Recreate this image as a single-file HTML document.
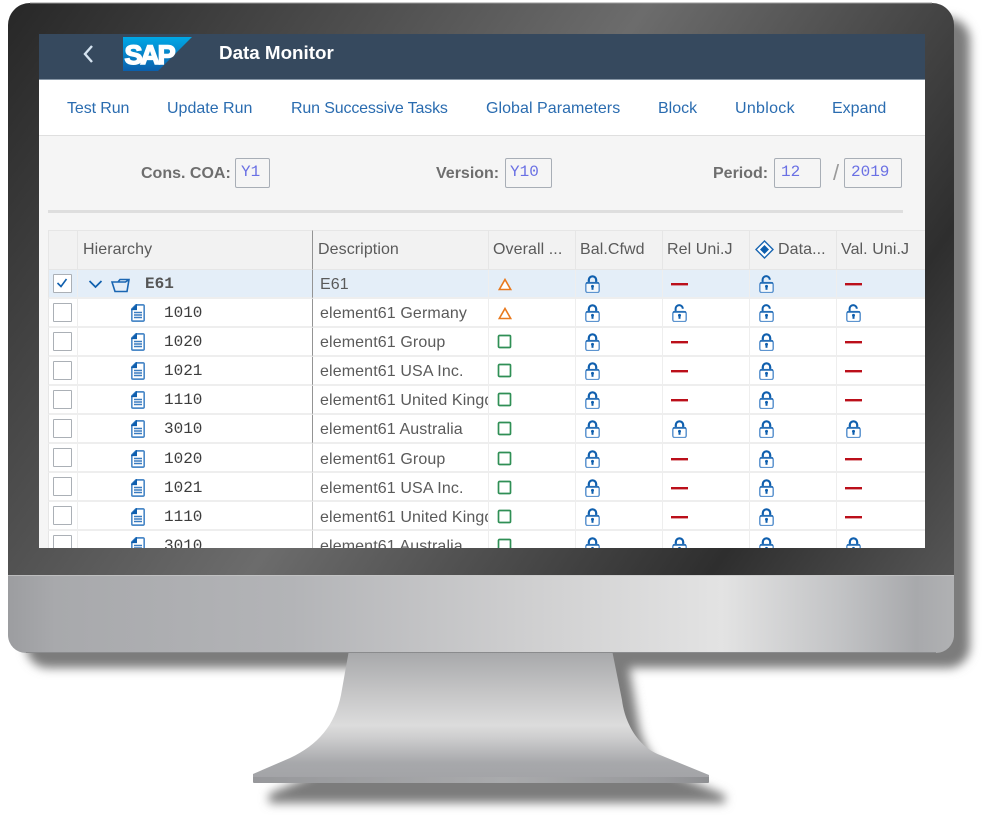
<!DOCTYPE html>
<html><head><meta charset="utf-8"><style>
*{box-sizing:border-box}
html,body{margin:0;padding:0;background:#fff;width:1000px;height:820px;overflow:hidden}
body{position:relative;font-family:"Liberation Sans",sans-serif}
#bg{position:absolute;left:0;top:0}
#screen{position:absolute;left:39px;top:34px;width:886px;height:514px;overflow:hidden;background:#f5f5f5;filter:blur(.3px)}
.hdr{position:absolute;left:0;top:0;width:886px;height:46px;background:#36495e;border-bottom:1px solid #8796a5}
.tb{position:absolute;left:0;top:46px;width:886px;height:56px;background:#fff;border-bottom:1px solid #dfdfdf}
.tb span{position:absolute;top:19px;font-size:16px;line-height:20px;color:#2a6cb0;white-space:nowrap}
.title{position:absolute;left:180px;top:8px;color:#fff;font-weight:bold;font-size:18.8px;line-height:22px}
.lbl{position:absolute;top:130px;font-weight:bold;font-size:16px;line-height:20px;color:#6e6e6e;white-space:nowrap}
.inp{position:absolute;top:124px;height:30px;border:1px solid #a8aeb6;border-radius:2px;font-family:"Liberation Mono",monospace;font-size:16px;line-height:27px;color:#6a70e4;padding-left:5px;background:#f5f5f5}
.rule{position:absolute;left:9px;top:176px;width:855px;height:3px;background:#dedede}
table{position:absolute;left:9px;top:196px;width:878px;border-collapse:separate;border-spacing:0;table-layout:fixed;font-size:16px;color:#5a5a5a}
th{height:40px;background:#f2f2f2;font-weight:normal;text-align:left;padding:0 0 1px 4px;border-top:1px solid #e6e6e6;border-right:1px solid #e6e6e6;border-bottom:1px solid #e6e6e6;white-space:nowrap;overflow:hidden;color:#5a5a5a;letter-spacing:.08px}
th.p{padding-left:5px}
td{height:29px;background:#fff;padding:2px 0 0 7px;border-bottom:2px solid #eeeeee;border-right:1px solid #eeeeee;white-space:nowrap;overflow:hidden;position:relative;letter-spacing:.12px}
tr.s td{background:#e4eef8}
tr.l td{padding-top:4px}
tr.l svg.i{transform:translateY(1px)}
td:first-child,th:first-child{border-left:1px solid #e6e6e6;padding:0}
tr.l td:first-child{padding:0}
td.t,th.t{border-right:1px solid #949494}
tr.l td.t{border-right:1px solid #c4c4c4}
.cb{display:block;width:19px;height:19px;margin:0 0 1px 4px;border:1.5px solid #abb0b6;background:#fff;border-radius:1px}
.code{position:absolute;left:86px;top:3px;font-family:"Liberation Mono",monospace;font-size:16px;line-height:22px;color:#3c3c3c;letter-spacing:0}
tr.l .code{top:4px}
svg.i{display:block;position:absolute}
.k{left:9px;top:5px;width:15px;height:18px}
.d{left:8px;top:13px;width:18px;height:3px}
.q{left:8px;top:6px;width:15px;height:15px}
.w{left:9px;top:8px;width:14px;height:13px}
.o{left:53px;top:5px;width:14px;height:18px}
</style></head><body>
<svg id="bg" width="1000" height="820" viewBox="0 0 1000 820">
<defs>
<linearGradient id="bz" gradientUnits="userSpaceOnUse" x1="0" y1="0" x2="911" y2="637"><stop offset="0" stop-color="#262626"/><stop offset=".48" stop-color="#6c6c6c"/><stop offset=".82" stop-color="#2e2e2e"/><stop offset="1" stop-color="#565656"/></linearGradient>
<linearGradient id="sl" x1="0" x2="1" y1="0" y2="0"><stop offset="0" stop-color="#9c9da0"/><stop offset=".05" stop-color="#a8a9ac"/><stop offset=".3" stop-color="#b3b4b7"/><stop offset=".55" stop-color="#cfcfd0"/><stop offset=".755" stop-color="#e3e3e3"/><stop offset=".88" stop-color="#c2c3c5"/><stop offset=".96" stop-color="#a8a9ac"/><stop offset="1" stop-color="#b0b1b3"/></linearGradient>
<linearGradient id="st" gradientUnits="userSpaceOnUse" x1="0" y1="653" x2="0" y2="778"><stop offset="0" stop-color="#a8a9ab"/><stop offset=".3" stop-color="#c4c4c5"/><stop offset=".58" stop-color="#dcdcdc"/><stop offset=".68" stop-color="#cdcdce"/><stop offset=".88" stop-color="#a7a8ab"/><stop offset="1" stop-color="#a3a4a7"/></linearGradient>
<linearGradient id="ft" x1="0" x2="1" y1="0" y2="0"><stop offset="0" stop-color="#97989b"/><stop offset=".55" stop-color="#a9aaac"/><stop offset=".9" stop-color="#98999c"/><stop offset="1" stop-color="#8e8f92"/></linearGradient>
<filter id="bl" x="-10%" y="-10%" width="120%" height="120%"><feGaussianBlur stdDeviation="5"/></filter>
</defs>
<g filter="url(#bl)" fill="#7c7c7c">
<rect x="26" y="18" width="944" height="650" rx="22"/>
<path transform="translate(16,20)" d="M349 640 L341 695 C335 725 318 745 290 758 L253 774 L253 783 L709 783 L709 775 L660 755 C640 748 625 725 622 700 L612 640 Z"/>
</g>
<path d="M30 3 H932 A22 22 0 0 1 954 25 V575 H8 V25 A22 22 0 0 1 30 3 Z" fill="url(#bz)"/>
<path d="M30 3 H932" stroke="#9a9a9a" stroke-width="1" fill="none"/>
<path d="M349 650 L341 695 C335 725 318 745 290 758 L253 774 L253 780 L709 780 L709 775 L660 755 C640 748 625 725 622 700 L612 650 Z" fill="url(#st)"/>
<path d="M253 777 H709 V782 Q709 783 708 783 H254 Q253 783 253 782 Z" fill="url(#ft)"/>
<path d="M8 575 H954 V635 A18 18 0 0 1 936 653 H26 A18 18 0 0 1 8 635 Z" fill="url(#sl)"/>
<path d="M8 575.5 H954" stroke="#c9c9c9" stroke-width="1" opacity=".7"/>
<path d="M26 652.5 H936" stroke="#8a8b8d" stroke-width="1"/>
<symbol id="lk" viewBox="0 0 15 18"><path d="M3.8 8.5 V5 a3.7 3.7 0 0 1 7.4 0 V8.5" fill="none" stroke="#0f5fae" stroke-width="2.2"/><rect x=".8" y="7.6" width="13.4" height="10" rx="2" fill="#fff" fill-opacity=".6" stroke="#5d94cf" stroke-width="1.5"/><path d="M1 8 H14" stroke="#0f5fae" stroke-width="1.4"/><circle cx="7.5" cy="11.4" r="1.5" fill="#0f5fae"/><rect x="6.5" y="11.5" width="2" height="3.3" fill="#0f5fae"/></symbol>
<symbol id="un" viewBox="0 0 15 18"><path d="M3.6 8.5 V4.7 a3.6 3.6 0 0 1 7.2 0" fill="none" stroke="#0f5fae" stroke-width="2"/><rect x=".8" y="7.6" width="13.4" height="10" rx="2" fill="#fff" fill-opacity=".6" stroke="#5d94cf" stroke-width="1.5"/><path d="M1 8 H14" stroke="#0f5fae" stroke-width="1.4"/><circle cx="7.5" cy="11.4" r="1.5" fill="#0f5fae"/><rect x="6.5" y="11.5" width="2" height="3.3" fill="#0f5fae"/></symbol>
<symbol id="dc" viewBox="0 0 14 18"><path d="M5 .9 H12 a1.2 1.2 0 0 1 1.2 1.2 V15.9 a1.2 1.2 0 0 1 -1.2 1.2 H2 a1.2 1.2 0 0 1 -1.2 -1.2 V5 Z" fill="#fff" stroke="#4d8ac8" stroke-width="1.7"/><path d="M5.5 .8 L.8 5.6 H5.5 Z" fill="#0f5fae" stroke="#0f5fae" stroke-width="1"/><path d="M3 8.5 H11 M3 11 H11 M3 13.5 H11" stroke="#3a7cc0" stroke-width="1.4"/></symbol>
<symbol id="da" viewBox="0 0 18 3"><rect width="17" height="2.4" fill="#bb0f1a"/></symbol>
<symbol id="sq" viewBox="0 0 15 15"><rect x="1.5" y="1.5" width="12" height="12" rx="1" fill="#fff" stroke="#2f8f55" stroke-width="1.7"/></symbol>
<symbol id="tr" viewBox="0 0 14 13"><path d="M7 1.5 L12.7 11.5 H1.3 Z" fill="#fff" stroke="#e8791e" stroke-width="1.6"/></symbol>
</svg>
<div id="screen">
<div class="hdr">
<svg class="i" style="left:40px;top:9px" width="20" height="22" viewBox="0 0 20 22"><path d="M13 3 L6 11 L13 19" fill="none" stroke="#d5e3f0" stroke-width="2.4"/></svg>
<svg class="i" style="left:84px;top:3px" width="70" height="35" viewBox="0 0 70 35"><defs><linearGradient id="sap" x1="0" x2="0" y1="0" y2="1"><stop offset="0" stop-color="#00a8e6"/><stop offset="1" stop-color="#0b5fab"/></linearGradient></defs><path d="M0 0 H69 L35 34 H0 Z" fill="url(#sap)"/><text x="1.5" y="27" font-family="Liberation Sans,sans-serif" font-weight="bold" font-size="27" fill="#fff" stroke="#fff" stroke-width="1.5" letter-spacing="-2.2">SAP</text></svg>
<div class="title">Data Monitor</div>
</div>
<div class="tb">
<span style="left:28px;letter-spacing:-.1px">Test Run</span><span style="left:128px">Update Run</span><span style="left:252px;letter-spacing:-.15px">Run Successive Tasks</span><span style="left:447px;letter-spacing:.05px">Global Parameters</span><span style="left:619px">Block</span><span style="left:696px;letter-spacing:.3px">Unblock</span><span style="left:793px">Expand</span>
</div>
<div class="lbl" style="left:102px">Cons. COA:</div><div class="inp" style="left:196px;width:35px">Y1</div>
<div class="lbl" style="left:397px">Version:</div><div class="inp" style="left:466px;width:47px;padding-left:4px">Y10</div>
<div class="lbl" style="left:674px">Period:</div><div class="inp" style="left:735px;width:47px;padding-left:6px">12</div>
<div style="position:absolute;left:794px;top:128px;font-size:22px;line-height:22px;color:#9a9a9a">/</div>
<div class="inp" style="left:805px;width:58px;padding-left:6px">2019</div>
<div class="rule"></div>
<table>
<colgroup><col style="width:30px"><col style="width:235px"><col style="width:176px"><col style="width:87px"><col style="width:87px"><col style="width:87px"><col style="width:87px"><col style="width:89px"></colgroup>
<tr><th></th><th class="t p">Hierarchy</th><th class="p">Description</th><th>Overall ...</th><th>Bal.Cfwd</th><th>Rel Uni.J</th><th style="padding-left:28px;position:relative"><svg class="i" style="left:5px;top:9px" width="19" height="19" viewBox="0 0 19 19"><path d="M9.5 1 L18 9.5 L9.5 18 L1 9.5 Z" fill="#fff" stroke="#1a66b2" stroke-width="1.4"/><path d="M9.5 5 L14 9.5 L9.5 14 L5 9.5 Z" fill="#0f5fae"/></svg>Data...</th><th>Val. Uni.J</th></tr>

<tr class="s"><td><span class="cb"><svg width="16" height="16" viewBox="0 0 16 16" style="display:block"><path d="M3.5 8 L7 11.5 L12.5 4" fill="none" stroke="#0f5fae" stroke-width="1.6"/></svg></span></td><td class="t"><svg class="i" style="left:10px;top:9px" width="15" height="10" viewBox="0 0 15 10"><path d="M1.5 2 L7.5 8 L13.5 2" fill="none" stroke="#0f5fae" stroke-width="1.7"/></svg><svg class="i" style="left:33px;top:8px" width="19" height="15" viewBox="0 0 19 15"><path d="M1 4 H7 L9 1.5 H18 L16 13.5 H4 Z M1 4 H14.5 L18 1.5" fill="none" stroke="#1a66b2" stroke-width="1.6"/></svg><span class="code" style="left:67px;font-weight:bold;color:#555">E61</span></td><td>E61</td><td><svg class="i w"><use href="#tr"/></svg></td><td><svg class="i k"><use href="#lk"/></svg></td><td><svg class="i d"><use href="#da"/></svg></td><td><svg class="i k"><use href="#un"/></svg></td><td><svg class="i d"><use href="#da"/></svg></td></tr>

<tr><td><span class="cb"></span></td><td class="t"><svg class="i o"><use href="#dc"/></svg><span class="code">1010</span></td><td>element61 Germany</td><td><svg class="i w"><use href="#tr"/></svg></td><td><svg class="i k"><use href="#lk"/></svg></td><td><svg class="i k"><use href="#un"/></svg></td><td><svg class="i k"><use href="#un"/></svg></td><td><svg class="i k"><use href="#un"/></svg></td></tr>

<tr><td><span class="cb"></span></td><td class="t"><svg class="i o"><use href="#dc"/></svg><span class="code">1020</span></td><td>element61 Group</td><td><svg class="i q"><use href="#sq"/></svg></td><td><svg class="i k"><use href="#lk"/></svg></td><td><svg class="i d"><use href="#da"/></svg></td><td><svg class="i k"><use href="#lk"/></svg></td><td><svg class="i d"><use href="#da"/></svg></td></tr>

<tr><td><span class="cb"></span></td><td class="t"><svg class="i o"><use href="#dc"/></svg><span class="code">1021</span></td><td>element61 USA Inc.</td><td><svg class="i q"><use href="#sq"/></svg></td><td><svg class="i k"><use href="#lk"/></svg></td><td><svg class="i d"><use href="#da"/></svg></td><td><svg class="i k"><use href="#lk"/></svg></td><td><svg class="i d"><use href="#da"/></svg></td></tr>

<tr><td><span class="cb"></span></td><td class="t"><svg class="i o"><use href="#dc"/></svg><span class="code">1110</span></td><td>element61 United Kingdom</td><td><svg class="i q"><use href="#sq"/></svg></td><td><svg class="i k"><use href="#lk"/></svg></td><td><svg class="i d"><use href="#da"/></svg></td><td><svg class="i k"><use href="#lk"/></svg></td><td><svg class="i d"><use href="#da"/></svg></td></tr>

<tr><td><span class="cb"></span></td><td class="t"><svg class="i o"><use href="#dc"/></svg><span class="code">3010</span></td><td>element61 Australia</td><td><svg class="i q"><use href="#sq"/></svg></td><td><svg class="i k"><use href="#lk"/></svg></td><td><svg class="i k"><use href="#lk"/></svg></td><td><svg class="i k"><use href="#lk"/></svg></td><td><svg class="i k"><use href="#lk"/></svg></td></tr>

<tr class="l"><td><span class="cb"></span></td><td class="t"><svg class="i o"><use href="#dc"/></svg><span class="code">1020</span></td><td>element61 Group</td><td><svg class="i q"><use href="#sq"/></svg></td><td><svg class="i k"><use href="#lk"/></svg></td><td><svg class="i d"><use href="#da"/></svg></td><td><svg class="i k"><use href="#lk"/></svg></td><td><svg class="i d"><use href="#da"/></svg></td></tr>

<tr class="l"><td><span class="cb"></span></td><td class="t"><svg class="i o"><use href="#dc"/></svg><span class="code">1021</span></td><td>element61 USA Inc.</td><td><svg class="i q"><use href="#sq"/></svg></td><td><svg class="i k"><use href="#lk"/></svg></td><td><svg class="i d"><use href="#da"/></svg></td><td><svg class="i k"><use href="#lk"/></svg></td><td><svg class="i d"><use href="#da"/></svg></td></tr>

<tr class="l"><td><span class="cb"></span></td><td class="t"><svg class="i o"><use href="#dc"/></svg><span class="code">1110</span></td><td>element61 United Kingdom</td><td><svg class="i q"><use href="#sq"/></svg></td><td><svg class="i k"><use href="#lk"/></svg></td><td><svg class="i d"><use href="#da"/></svg></td><td><svg class="i k"><use href="#lk"/></svg></td><td><svg class="i d"><use href="#da"/></svg></td></tr>

<tr class="l"><td><span class="cb"></span></td><td class="t"><svg class="i o"><use href="#dc"/></svg><span class="code">3010</span></td><td>element61 Australia</td><td><svg class="i q"><use href="#sq"/></svg></td><td><svg class="i k"><use href="#lk"/></svg></td><td><svg class="i k"><use href="#lk"/></svg></td><td><svg class="i k"><use href="#lk"/></svg></td><td><svg class="i k"><use href="#lk"/></svg></td></tr>
</table>
</div>
</body></html>
